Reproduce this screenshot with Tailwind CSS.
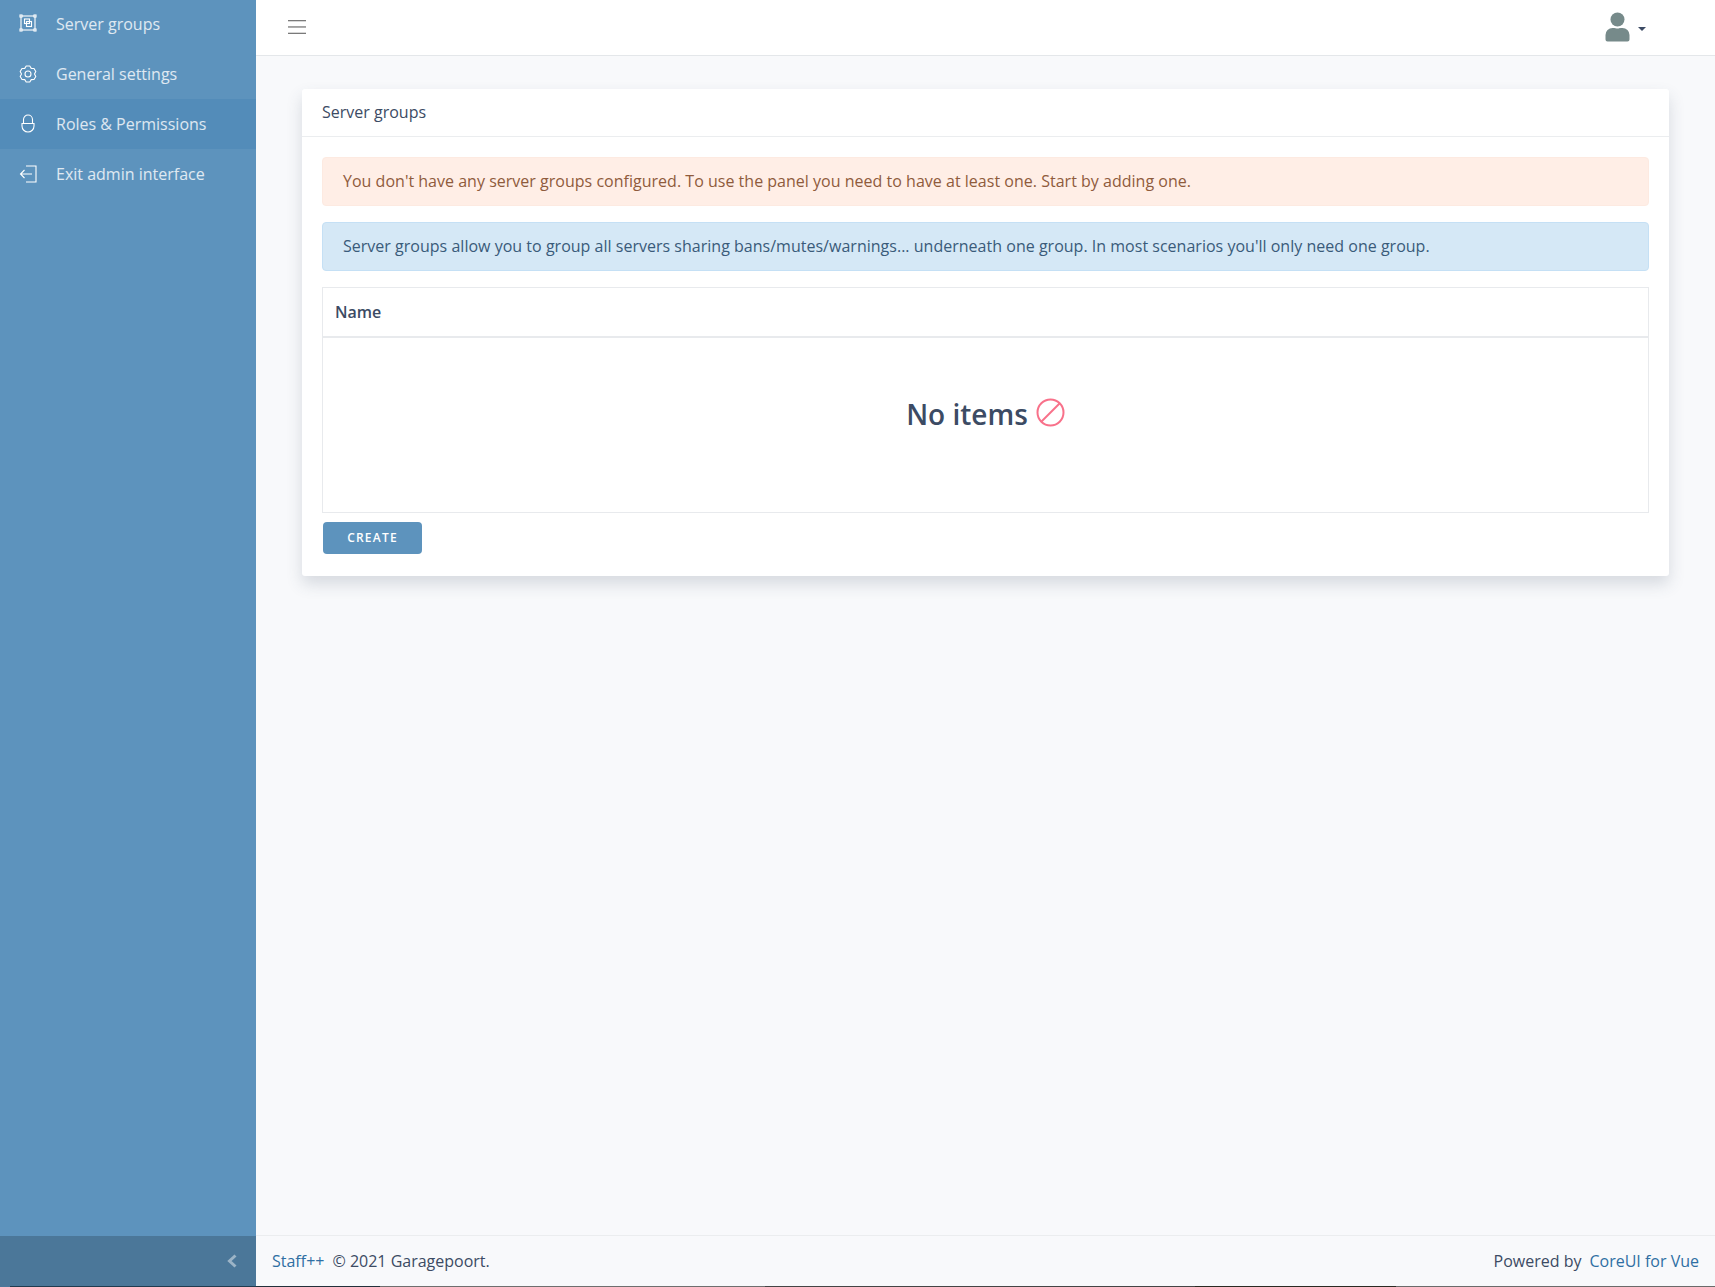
<!DOCTYPE html>
<html lang="en">
<head>
<meta charset="utf-8">
<title>Server groups</title>
<script src="https://cdn.jsdelivr.net/npm/@tailwindcss/browser@4"></script>
</head>
<body class="h-[1287px] w-[1715px] overflow-hidden bg-[#f8f9fb] font-['Open_Sans',sans-serif] text-[16px] text-[#3c4b64]">
<div class="flex h-[1286px]">
  <aside class="flex h-full w-[256px] shrink-0 flex-col bg-[#5d93bd] text-white/80">
    <nav class="-mt-px flex-1">
      <a class="flex h-[50px] items-center px-4"><svg class="mr-4 mb-[2px] h-[24px] w-[24px]" viewBox="0 0 24 24" fill="none" stroke="white" stroke-width="1.1"><rect x="5" y="5" width="14" height="14"/><rect x="4" y="4" width="2" height="2" fill="#5d93bd"/><rect x="18" y="4" width="2" height="2" fill="#5d93bd"/><rect x="4" y="18" width="2" height="2" fill="#5d93bd"/><rect x="18" y="18" width="2" height="2" fill="#5d93bd"/><rect x="8.500" y="8" width="5" height="4.500"/><rect x="10.500" y="10.500" width="5" height="5"/></svg>Server groups</a>
      <a class="flex h-[50px] items-center px-4"><svg class="mr-4 h-[24px] w-[24px]" viewBox="0 0 24 24" fill="none" stroke="white" stroke-width="1.1" stroke-linejoin="round"><path d="M10.200 4H13.800L15.250 6.370 18 6.440 19.800 9.560 18.500 12 19.800 14.440 18 17.560 15.250 17.630 13.800 20H10.200L8.750 17.630 6 17.560 4.200 14.440 5.500 12 4.200 9.560 6 6.440 8.750 6.370Z"/><circle cx="12" cy="12" r="3"/></svg>General settings</a>
      <a class="flex h-[50px] items-center bg-[#538cb9] px-4"><svg class="mr-4 h-[24px] w-[24px]" viewBox="0 0 24 24" fill="none" stroke="white" stroke-width="1.1"><path d="M7.500 11.500V7.500a4.500 4.500 0 0 1 9 0v4"/><path d="M6 11.500h12V14a6 6 0 0 1-12 0z"/></svg>Roles &amp; Permissions</a>
      <a class="flex h-[50px] items-center px-4"><svg class="mr-4 h-[24px] w-[24px]" viewBox="0 0 24 24" fill="none" stroke="white" stroke-width="1.1"><path d="M10 4h10v16H10"/><path d="M16 12H4.500M8.500 8l-4 4 4 4"/></svg>Exit admin interface</a>
    </nav>
    <div class="flex h-[50px] items-center justify-end bg-[#4b7799] pr-[18px]"><svg class="h-[14px] w-[12px]" viewBox="0 0 12 14" fill="none" stroke="white" stroke-opacity="0.45" stroke-width="3"><path d="M9.500 1.500L3.500 7l6 5.500"/></svg></div>
  </aside>
  <div class="flex min-w-0 flex-1 flex-col">
    <header class="flex h-[56px] shrink-0 items-center justify-between border-b border-[#e4e7ea] bg-white pr-[69px] pb-[2px] pl-[32px]">
      <svg class="h-[16px] w-[18px]" viewBox="0 0 18 16" fill="#7a7a7a"><rect y="1" width="18" height="1.300"/><rect y="7.300" width="18" height="1.300"/><rect y="13.700" width="18" height="1.300"/></svg>
      <div class="flex items-center">
        <svg class="h-[30px] w-[25px]" viewBox="0 0 25 30" fill="#768a8a"><circle cx="12.500" cy="7.500" r="7"/><path d="M.5 23a7 7 0 0 1 7-7h2c1 .6 5 .6 6 0h2a7 7 0 0 1 7 7v4.500a2 2 0 0 1-2 2h-20a2 2 0 0 1-2-2z"/></svg>
        <span class="mt-[4px] ml-[8px] h-0 w-0 border-x-[4px] border-t-[4px] border-x-transparent border-t-[#3c4b64]"></span>
      </div>
    </header>
    <main class="flex-1 px-[46px] pt-[33px]">
      <section class="rounded-[3px] bg-white shadow-[0_8px_16px_rgba(60,75,100,0.18)]">
        <div class="flex h-[48px] items-center border-b border-[#ebedef] px-[20px] pb-[2px]">Server groups</div>
        <div class="px-[20px] pt-[20px] pb-[22px]">
          <div class="flex h-[49px] items-center rounded-[4px] border border-[#fdeae1] bg-[#ffeee6] px-[20px] pb-[2px] tracking-[0.016px] text-[#8f5b3c]">You don't have any server groups configured. To use the panel you need to have at least one. Start by adding one.</div>
          <div class="mt-[16px] flex h-[49px] items-center rounded-[4px] border border-[#c5e0f5] bg-[#d5e8f6] px-[20px] pb-[2px] tracking-[0.016px] text-[#3a5b7a]">Server groups allow you to group all servers sharing bans/mutes/warnings... underneath one group. In most scenarios you'll only need one group.</div>
          <div class="mt-[16px] border border-[#e8eaed]">
            <div class="flex h-[50px] items-center border-b-2 border-[#e8eaed] px-[12px] font-semibold">Name</div>
            <div class="flex h-[174px] items-start justify-center pt-[57px]">
              <span class="text-[28px] leading-[38px] font-semibold">No items</span>
              <svg class="mt-[3px] ml-[8px] h-[29px] w-[29px]" viewBox="0 0 29 29" fill="none" stroke="#f8718a" stroke-width="2"><circle cx="14.500" cy="14.500" r="13"/><path d="M5.500 23.500l18-18"/></svg>
            </div>
          </div>
          <button class="mt-[9px] ml-px block h-[32px] w-[99px] rounded-[4px] bg-[#5d93bd] text-[12px] font-semibold tracking-[1.2px] text-white">CREATE</button>
        </div>
      </section>
    </main>
    <footer class="flex h-[51px] shrink-0 items-center justify-between border-t border-[#ebedef] px-[16px]">
      <div><a class="text-[#2f6fa3]">Staff++</a><span class="ml-[8px]">© 2021 Garagepoort.</span></div>
      <div><span class="mr-[8px]">Powered by</span><a class="text-[#2f6fa3]">CoreUI for Vue</a></div>
    </footer>
  </div>
</div>
<div class="flex h-px">
  <div class="w-[10px] bg-[#4b7799]"></div>
  <div class="w-[246px] bg-[#1f3b50]"></div>
  <div class="w-[124px] bg-[#22303a]"></div>
  <div class="w-[385px] bg-[#6e6e6e]"></div>
  <div class="w-[430px] bg-[#444444]"></div>
  <div class="w-[201px] bg-[#2a2a22]"></div>
  <div class="flex-1 bg-[#6a6a6a]"></div>
</div>
</body>
</html>
